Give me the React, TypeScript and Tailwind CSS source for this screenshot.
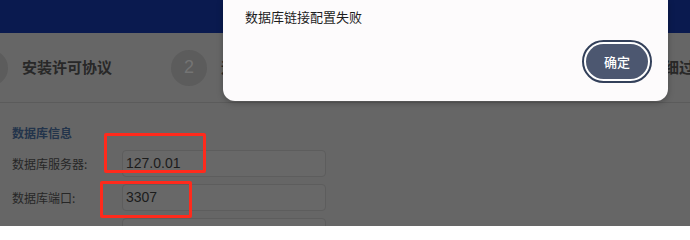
const steps = [
  { n: 1, label: "安装许可协议" },
  { n: 2, label: "运行环境检测" },
  { n: 3, label: "安装参数配置" },
  { n: 4, label: "安装详细过程" },
  { n: 5, label: "安装完成" },
];

const fields = [
  { label: "数据库服务器:", value: "127.0.01" },
  { label: "数据库端口:", value: "3307" },
  { label: "数据库用户名:", value: "root" },
];

export default function App() {
  return (
    <div className="relative w-[690px] h-[226px] overflow-hidden bg-[#666666] font-['Liberation_Sans','Noto_Sans_CJK_SC',sans-serif]">
      {/* top bar */}
      <div className="h-[33px] bg-[#0a1a4f]" />

      {/* steps */}
      <div className="flex h-[70px] items-center overflow-hidden border-b border-[#5b5b5b]">
        <div className="flex ml-[-28px]">
          {steps.map((s) => (
            <div key={s.n} className="flex w-[199px] shrink-0 items-center gap-[14px]">
              <div className="flex h-[36px] w-[36px] items-center justify-center rounded-full bg-[#5c5c5c] text-[18px] text-[#747474]">
                {s.n}
              </div>
              <span className="whitespace-nowrap text-[15px] font-bold text-[#282828] font-['Noto_Sans_CJK_SC',sans-serif]">
                {s.label}
              </span>
            </div>
          ))}
        </div>
      </div>

      {/* form */}
      <div className="pl-[12px] pt-[22px]">
        <div className="h-[16px] text-[12px] leading-[16px] font-bold text-[#23344b] font-['Noto_Sans_CJK_SC',sans-serif]">
          数据库信息
        </div>
        <div className="mt-[9px] flex flex-col gap-[7px]">
          {fields.map((f) => (
            <div key={f.label} className="flex items-center">
              <span className="w-[110px] text-[12px] text-[#262626] font-['Noto_Sans_CJK_SC',sans-serif]">
                {f.label}
              </span>
              <div className="flex h-[27px] w-[204px] items-center rounded-[4px] border border-[#5d5d5d] bg-[#686868] px-[3px] text-[14px] text-[#1c1c1c]">
                {f.value}
              </div>
            </div>
          ))}
        </div>
      </div>

      {/* annotation boxes */}
      <div className="absolute left-[104px] top-[133px] h-[40px] w-[102px] rounded-[2px] border-[3px] border-[#ff2a1c]" />
      <div className="absolute left-[100px] top-[181px] h-[37px] w-[92px] rounded-[2px] border-[3px] border-[#ff2a1c]" />

      {/* alert dialog */}
      <div className="absolute left-[223px] top-0 flex h-[101px] w-[445px] flex-col rounded-b-[12px] bg-[#fdfbfc] shadow-[0_2px_6px_rgba(0,0,0,0.25)]">
        <div className="pl-[22px] pt-[8px] text-[13px] leading-[18px] text-[#1d1d1d] font-['Noto_Sans_CJK_SC',sans-serif]">
          数据库链接配置失败
        </div>
        <div className="mt-[14px] flex justify-end pr-[16px]">
          <button className="h-[43px] w-[70px] rounded-full border-2 border-[#33405a] bg-white p-[2px]">
            <span className="flex h-full w-full items-center justify-center rounded-full bg-[#4c5770] text-[13px] font-medium text-white font-['Noto_Sans_CJK_SC',sans-serif]">
              确定
            </span>
          </button>
        </div>
      </div>
    </div>
  );
}
